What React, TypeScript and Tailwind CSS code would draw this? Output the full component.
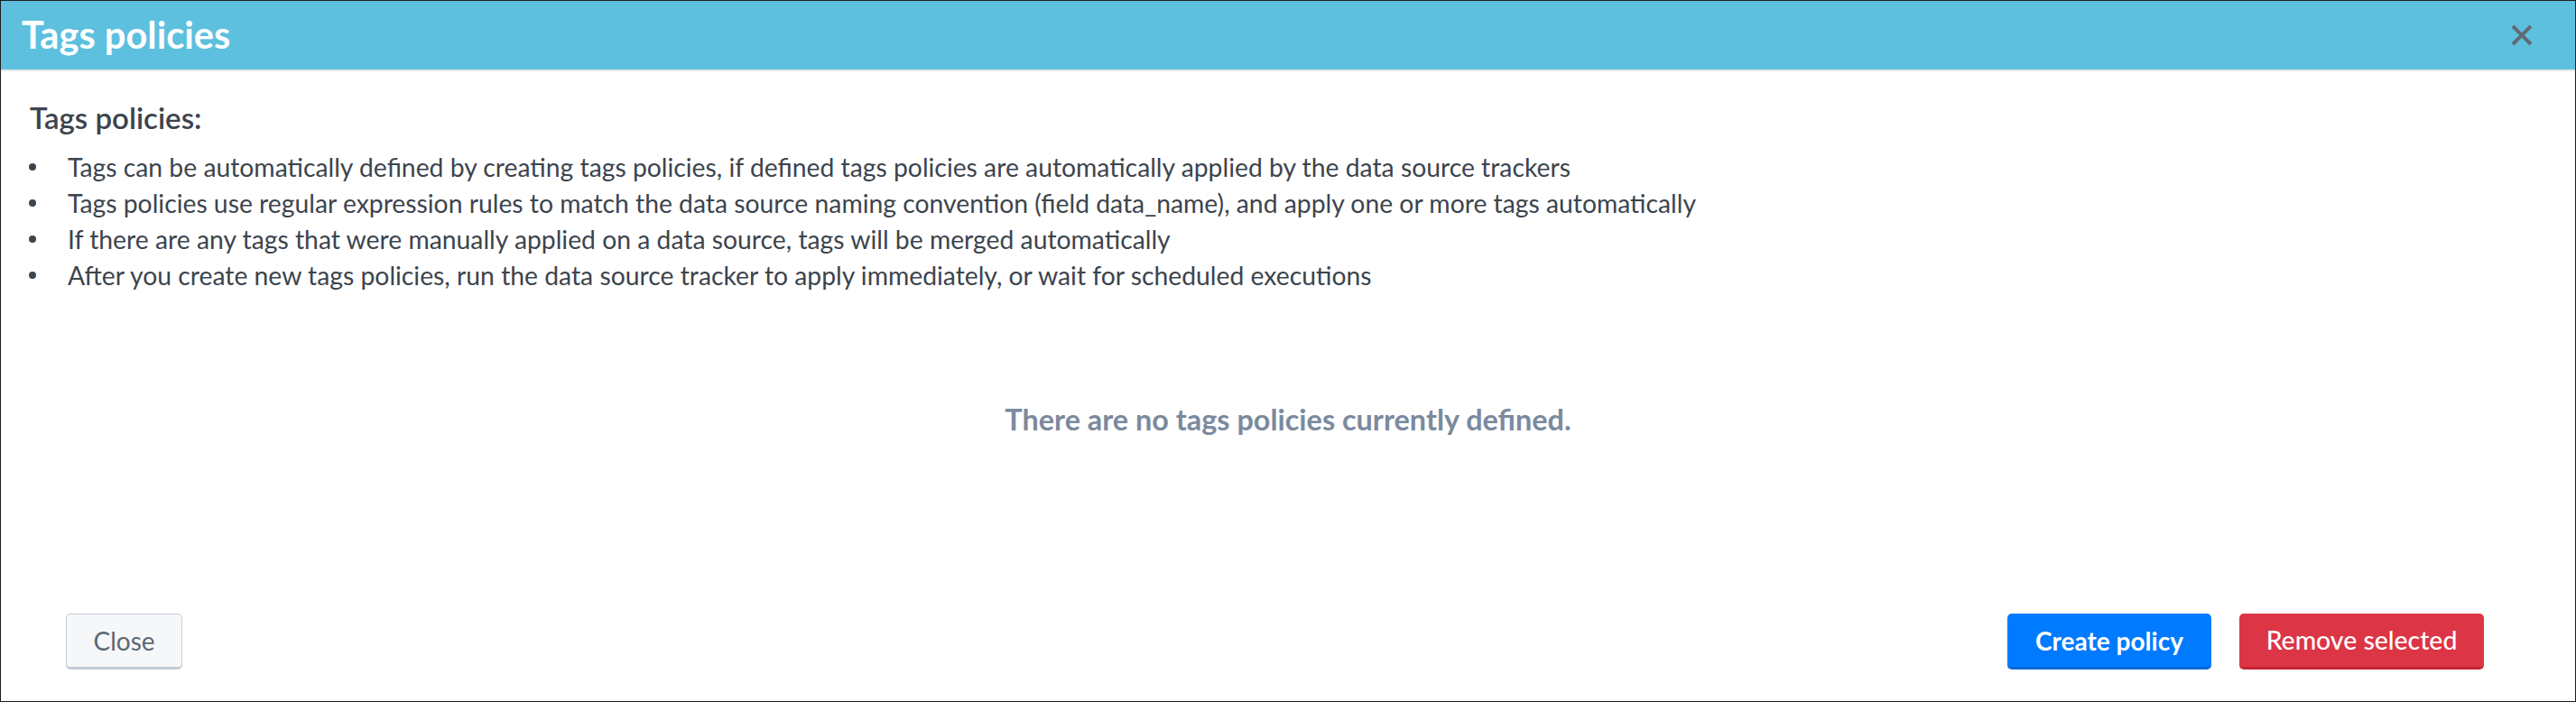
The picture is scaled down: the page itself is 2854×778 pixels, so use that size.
import React from 'react';

const notes = [
  'Tags can be automatically defined by creating tags policies, if defined tags policies are automatically applied by the data source trackers',
  'Tags policies use regular expression rules to match the data source naming convention (field data_name), and apply one or more tags automatically',
  'If there are any tags that were manually applied on a data source, tags will be merged automatically',
  'After you create new tags policies, run the data source tracker to apply immediately, or wait for scheduled executions',
];

export default function App() {
  return (
    <div className="flex h-[778px] w-[2854px] flex-col border border-[#1e1e1e] bg-white font-['Lato',sans-serif] text-[#3c444d]">
      <div className="flex h-[78px] items-center justify-between border-b-2 border-[#e4e6e8] bg-[#5dc0df] pl-[23px] pr-[47px]">
        <h1 className="text-[41.6px] font-bold leading-none text-white">Tags policies</h1>
        <button aria-label="Close" className="flex h-[24px] w-[24px] items-center justify-center">
          <svg width="24" height="24" viewBox="0 0 24 24">
            <path d="M2 2 L22 22 M22 2 L2 22" stroke="#636a75" strokeWidth="4" strokeLinecap="butt" />
          </svg>
        </button>
      </div>

      <div className="pt-[32px]">
        <h2 className="pl-[32px] text-[33px] font-semibold leading-[38px]">Tags policies:</h2>
        <ul className="mt-[16px] text-[28.3px] leading-[40px]">
          {notes.map(n => (
            <li key={n} className="flex items-center">
              <span className="ml-[31px] mr-[35px] inline-block h-[8px] w-[8px] shrink-0 rounded-full bg-[#3c444d]" />
              <span>{n}</span>
            </li>
          ))}
        </ul>
      </div>

      <p className="mt-[121px] text-center text-[32.4px] font-bold leading-[38px] text-[#7b8a9e]">
        There are no tags policies currently defined.
      </p>

      <div className="mt-auto flex items-center justify-between pb-[35px] pl-[72px] pr-[101px]">
        <button className="h-[62px] w-[129px] rounded-[5px] border border-b-[3px] border-[#c3cbd4] bg-[#f5f7f9] text-[28px] text-[#5c6773]">
          Close
        </button>
        <div className="flex gap-[31px]">
          <button className="h-[62px] w-[226px] rounded-[5px] border-b-[3px] border-[#0069d9] bg-[#007bff] text-[28px] font-bold text-white">
            Create policy
          </button>
          <button className="h-[62px] w-[271px] rounded-[5px] border-b-[3px] border-[#c82333] bg-[#dc3545] text-[28.4px] font-medium text-white">
            Remove selected
          </button>
        </div>
      </div>
    </div>
  );
}
